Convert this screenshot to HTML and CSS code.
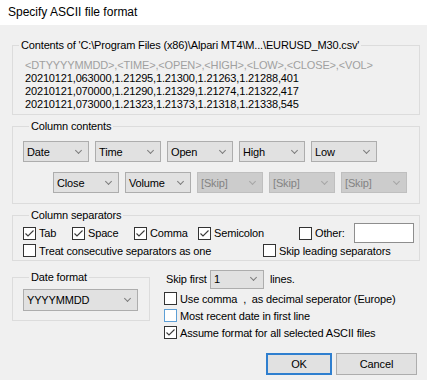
FILE: index.html
```html
<!DOCTYPE html>
<html>
<head>
<meta charset="UTF-8">
<title>Specify ASCII file format</title>
<link rel="stylesheet" href="styles.css">
</head>
<body>
<div class="dialog">
    <div class="titlebar">Specify ASCII file format</div>

    <div class="client">
        <fieldset class="group preview">
            <legend>Contents of 'C:\Program Files (x86)\Alpari MT4\M...\EURUSD_M30.csv'</legend>
            <div class="lines">
                <div class="head-line">&lt;DTYYYYMMDD&gt;,&lt;TIME&gt;,&lt;OPEN&gt;,&lt;HIGH&gt;,&lt;LOW&gt;,&lt;CLOSE&gt;,&lt;VOL&gt;</div>
                <div>20210121,063000,1.21295,1.21300,1.21263,1.21288,401</div>
                <div>20210121,070000,1.21290,1.21329,1.21274,1.21322,417</div>
                <div>20210121,073000,1.21323,1.21373,1.21318,1.21338,545</div>
            </div>
        </fieldset>

        <fieldset class="group columns">
            <legend>Column contents</legend>
            <div class="combo-row">
                <div class="select">Date</div>
                <div class="select">Time</div>
                <div class="select">Open</div>
                <div class="select">High</div>
                <div class="select">Low</div>
            </div>
            <div class="combo-row second">
                <div class="select">Close</div>
                <div class="select">Volume</div>
                <div class="select off">[Skip]</div>
                <div class="select off">[Skip]</div>
                <div class="select off">[Skip]</div>
            </div>
        </fieldset>

        <fieldset class="group seps">
            <legend>Column separators</legend>
            <div class="sep-row first">
                <label class="check w-tab"><span class="cb on"><svg width="11" height="11" viewBox="0 0 11 11"><polyline points="1.5,5.5 4,8 9.5,2.5"/></svg></span>Tab</label>
                <label class="check w-space"><span class="cb on"><svg width="11" height="11" viewBox="0 0 11 11"><polyline points="1.5,5.5 4,8 9.5,2.5"/></svg></span>Space</label>
                <label class="check w-comma"><span class="cb on"><svg width="11" height="11" viewBox="0 0 11 11"><polyline points="1.5,5.5 4,8 9.5,2.5"/></svg></span>Comma</label>
                <label class="check w-semi"><span class="cb on"><svg width="11" height="11" viewBox="0 0 11 11"><polyline points="1.5,5.5 4,8 9.5,2.5"/></svg></span>Semicolon</label>
                <label class="check w-other"><span class="cb"></span>Other:</label>
                <div class="edit"></div>
            </div>
            <div class="sep-row">
                <label class="check w-treat"><span class="cb"></span>Treat consecutive separators as one</label>
                <label class="check"><span class="cb"></span>Skip leading separators</label>
            </div>
        </fieldset>

        <div class="bottom">
            <fieldset class="group datefmt">
                <legend>Date format</legend>
                <div class="select wide">YYYYMMDD</div>
            </fieldset>

            <div class="options">
                <div class="skip-row">
                    <span class="skip-label">Skip first</span>
                    <div class="select small">1</div>
                    <span class="skip-unit">lines.</span>
                </div>
                <label class="check opt"><span class="cb"></span>Use comma&nbsp; , &nbsp;as decimal seperator (Europe)</label>
                <label class="check opt"><span class="cb hot"></span>Most recent date in first line</label>
                <label class="check opt"><span class="cb on"><svg width="11" height="11" viewBox="0 0 11 11"><polyline points="1.5,5.5 4,8 9.5,2.5"/></svg></span>Assume format for all selected ASCII files</label>

                <div class="buttons">
                    <button class="btn default">OK</button>
                    <button class="btn cancel">Cancel</button>
                </div>
            </div>
        </div>
    </div>
</div>
</body>
</html>
```

FILE: styles.css
```css
@charset "utf-8";
/* dialog reset */
body, div, fieldset, legend, label, button {margin: 0; padding: 0;}

body {
    background: #f0f0f0;
    font: 11px "Liberation Sans", Arial, sans-serif;
    letter-spacing: -0.15px;
    color: #000;
}

.dialog {
    width: 427px;
    height: 380px;
    overflow: hidden;
}

.titlebar {
    height: 25px;
    line-height: 24px;
    padding-left: 8px;
    background: #fff;
    font-size: 12px;
    letter-spacing: 0;
}

.client {
    padding: 0 7px 0 12px;
}

/* group boxes */
.group {
    border: 1px solid #dcdcdc;
    min-width: 0;
    margin-top: 5px;
}

.group legend {
    margin-left: 6px;
    padding: 0 2px;
    line-height: 13px;
}

.preview {
    margin-top: 14px;
}

.preview .lines {
    padding: 7px 12px 3px;
    line-height: 13px;
    white-space: nowrap;
}

.preview .head-line {
    color: #a0a0a0;
}

.columns {
    padding: 8px 0 10px 10px;
}

.combo-row {
    display: flex;
    gap: 6px;
}

.combo-row.second {
    margin-top: 10px;
    margin-left: 30px;
}

/* combo boxes */
.select {
    box-sizing: border-box;
    width: 66px;
    height: 21px;
    border: 1px solid #adadad;
    background: #e1e1e1;
    padding: 0 7px 0 3px;
    display: flex;
    align-items: center;
    justify-content: space-between;
}

.select::after {
    content: "";
    width: 4px;
    height: 4px;
    border-right: 1px solid #7c7c7c;
    border-bottom: 1px solid #7c7c7c;
    transform: rotate(45deg);
    margin-top: -3px;
}

.select.off {
    background: #cccccc;
    border-color: #bfbfbf;
    color: #838383;
}

.select.off::after {
    border-color: #a6a6a6;
}

.select.wide {
    width: 115px;
    height: 22px;
}

.select.small {
    width: 54px;
    height: 19px;
}

/* check boxes */
.check {
    display: flex;
    align-items: center;
    gap: 3px;
    white-space: nowrap;
}

.cb {
    box-sizing: border-box;
    width: 13px;
    height: 13px;
    flex-shrink: 0;
    border: 1px solid #333;
    background: #fff;
}

.cb svg {
    display: block;
}

.cb polyline {
    fill: none;
    stroke: #3a3a3a;
    stroke-width: 1.1;
}

.cb.hot {
    border-color: #5d9fd6;
}

.seps {
    padding: 1px 0 2px 10px;
}

.sep-row {
    display: flex;
    align-items: center;
    height: 15px;
}

.sep-row.first {
    height: 20px;
}

.w-tab {width: 49px;}
.w-space {width: 62px;}
.w-comma {width: 64px;}
.w-semi {width: 101px;}
.w-other {width: 55px;}
.w-treat {width: 240px;}

.edit {
    box-sizing: border-box;
    width: 60px;
    height: 20px;
    border: 1px solid #8e8e8e;
    background: #fff;
}

/* lower part */
.bottom {
    display: flex;
    margin-top: 8px;
}

.datefmt {
    width: 138px;
    box-sizing: border-box;
    height: 50px;
    margin-top: 2px;
    padding: 5px 0 0 10px;
}

.options {
    flex: 1;
    margin-left: 14px;
}

.skip-row {
    display: flex;
    align-items: center;
    height: 20px;
}

.skip-label {
    width: 44px;
    padding-left: 2px;
}

.skip-unit {
    margin-left: 6px;
}

.check.opt {
    height: 17px;
}

.skip-row + .check.opt {
    margin-top: 1px;
}

.buttons {
    display: flex;
    justify-content: flex-end;
    gap: 4px;
    margin: 12px 3px 0 0;
}

.btn {
    box-sizing: border-box;
    height: 22px;
    border: 1px solid #adadad;
    background: #e1e1e1;
    font: 11px "Liberation Sans", Arial, sans-serif;
    letter-spacing: -0.15px;
    color: #000;
}

.btn.default {
    width: 66px;
    border: 2px solid #2f7fcf;
}

.btn.cancel {
    width: 81px;
}
```
